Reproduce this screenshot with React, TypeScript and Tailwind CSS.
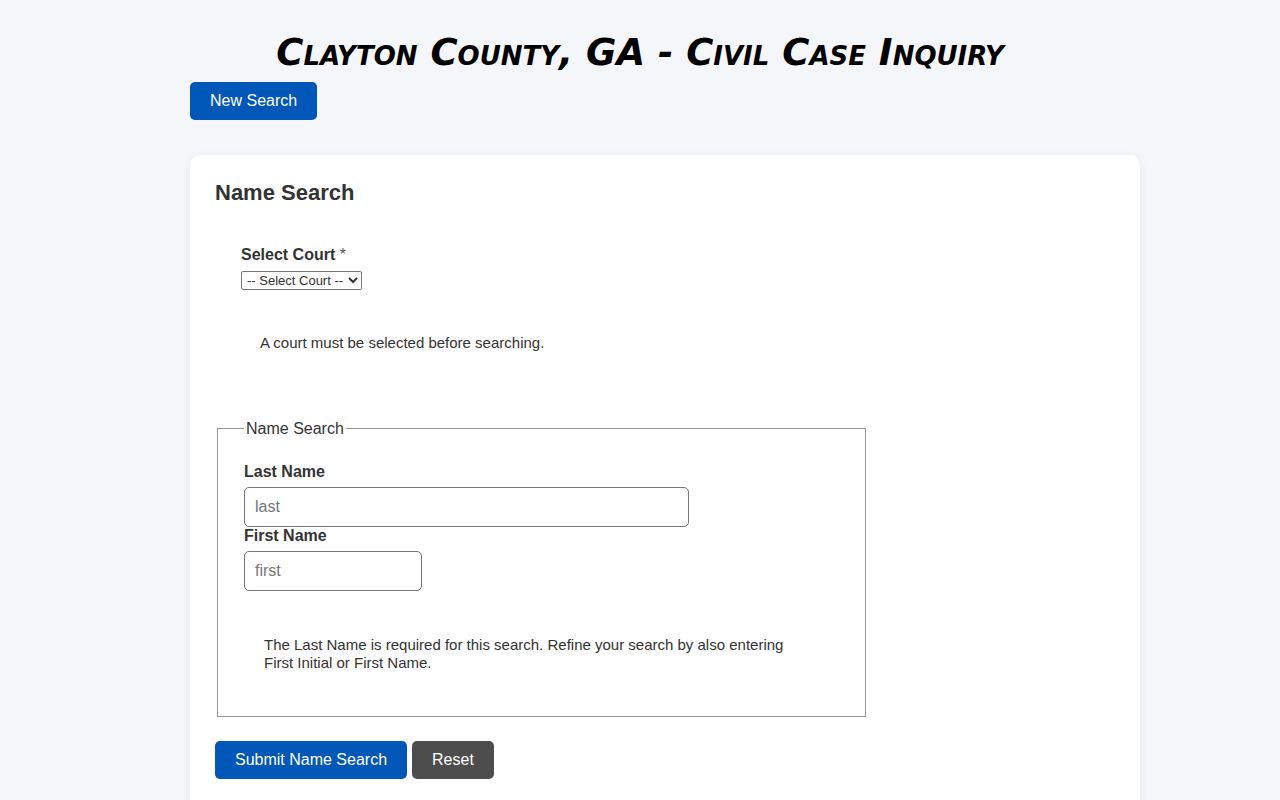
import React, { useState } from 'react';

const App: React.FC = () => {
  const [court, setCourt] = useState('');
  const [last, setLast] = useState('');
  const [first, setFirst] = useState('');

  const handleReset = () => {
    setCourt('');
    setLast('');
    setFirst('');
  };

  return (
    <div className="min-h-screen bg-[#f5f6f9] text-[#333] font-['Liberation_Sans',Arial,sans-serif]">
      <h1 className="pt-[31px] text-center text-[37px] leading-[43px] font-bold italic [font-variant:small-caps] text-black font-['DejaVu_Sans',Verdana,sans-serif]">
        Clayton County, GA - Civil Case Inquiry
      </h1>
      <div className="max-w-[1000px] mx-auto pl-[50px]">
        <button type="button" onClick={handleReset} className="mt-[8px] h-[38px] px-5 bg-[#0057b7] text-white text-base rounded-[5px]">
          New Search
        </button>

        <div className="mt-[35px] bg-white rounded-[10px] shadow-[0_2px_10px_rgba(0,0,0,0.06)] px-[25px] pt-[24px] pb-[30px]">
          <h2 className="text-[22px] leading-[28px] font-bold text-[#333]">Name Search</h2>

          <div className="mt-[38px] pl-[26px]">
            <label className="block text-base font-bold leading-[19px]">
              Select Court <span className="font-normal text-[#555]">*</span>
            </label>
            <select
              value={court}
              onChange={(e) => setCourt(e.target.value)}
              className="mt-[7px] h-[19px] border border-[#767676] rounded-[2px] text-[13px] leading-[15px] px-[1px] bg-white appearance-auto"
            >
              <option value="">-- Select Court --</option>
              <option value="magistrate">Magistrate Court</option>
              <option value="state">State Court</option>
              <option value="superior">Superior Court</option>
            </select>
            <p className="mt-[42px] pl-[19px] text-[15px] leading-[18px]">A court must be selected before searching.</p>
          </div>

          <fieldset className="mt-[67px] ml-[2px] w-[649px] border border-[#999] px-[26px] pt-[24px] pb-[44px]">
            <legend className="px-[2px] text-base leading-[19px] text-[#333]">Name Search</legend>
            <label className="block text-base font-bold leading-[19px]">Last Name</label>
            <input
              value={last}
              onChange={(e) => setLast(e.target.value)}
              placeholder="last"
              className="mt-[6px] block w-[445px] h-[40px] border border-[#777] rounded-[5px] px-[10px] text-base placeholder:text-[#777] outline-none"
            />
            <label className="mt-[-1px] block text-base font-bold leading-[19px]">First Name</label>
            <input
              value={first}
              onChange={(e) => setFirst(e.target.value)}
              placeholder="first"
              className="mt-[6px] block w-[178px] h-[40px] border border-[#777] rounded-[5px] px-[10px] text-base placeholder:text-[#777] outline-none"
            />
            <p className="mt-[45px] pl-[20px] max-w-[570px] text-[15px] leading-[18px]">
              The Last Name is required for this search. Refine your search by also entering First Initial or First Name.
            </p>
          </fieldset>

          <div className="mt-[24px] flex gap-[5px]">
            <button type="submit" className="h-[38px] px-5 bg-[#0057b7] text-white text-base rounded-[5px]">
              Submit Name Search
            </button>
            <button type="button" onClick={handleReset} className="h-[38px] px-5 bg-[#4d4d4d] text-white text-base rounded-[5px]">
              Reset
            </button>
          </div>
        </div>
      </div>
    </div>
  );
};

export default App;
